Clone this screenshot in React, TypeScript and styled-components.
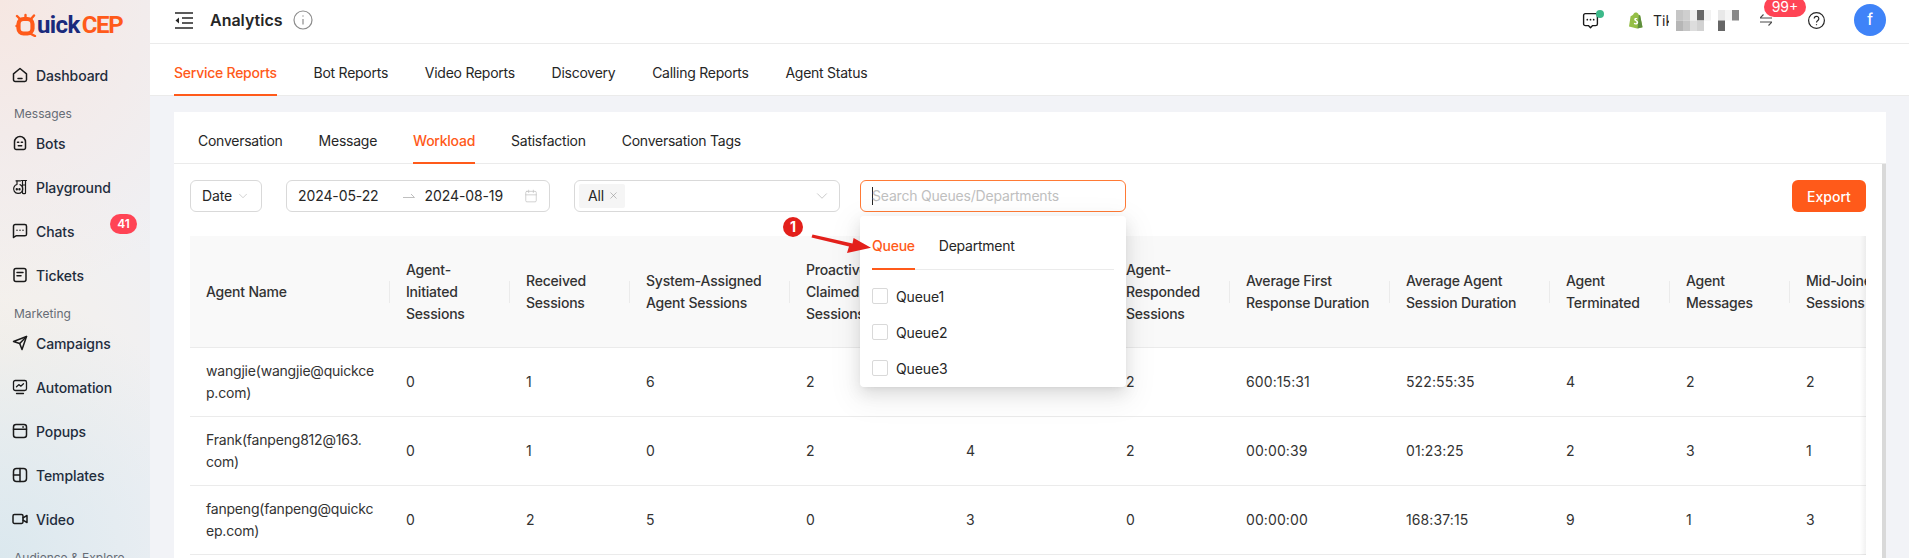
import React from 'react'
import styled, { createGlobalStyle } from 'styled-components'
import { Calendar, ChevronDown, X } from 'lucide-react'

const ORANGE = '#ff5a1a'

const GlobalStyle = createGlobalStyle`
  html, body {
    margin: 0;
    padding: 0;
    background: #fff;
    font-family: Inter, "Liberation Sans", sans-serif;
    font-size: 14px;
    letter-spacing: -0.2px;
    color: #262626;
  }
`

const Page = styled.div`
  display: flex;
  width: 1909px;
  height: 558px;
  overflow: hidden;
`

const Sidebar = styled.aside`
  width: 150px;
  flex: none;
  height: 100%;
  overflow: hidden;
  background:
    radial-gradient(260px 300px at 0% 0%, #f6e7e2 0%, rgba(246, 231, 226, 0) 100%),
    radial-gradient(240px 260px at 0% 100%, #dbe8ee 0%, rgba(219, 232, 238, 0) 100%),
    radial-gradient(200px 200px at 0% 62%, #f5f0ea 0%, rgba(245, 240, 234, 0) 100%),
    #eff0f4;
`

const Logo = styled.div`
  display: flex;
  align-items: center;
  height: 53px;
  padding: 0 0 4px 15px;
  box-sizing: border-box;
  font-family: Roboto, sans-serif;
  font-size: 24px;
  font-weight: 700;
`

const LogoDark = styled.span`
  color: #1a2a7c;
  letter-spacing: -0.6px;
`

const LogoBright = styled.span`
  color: ${ORANGE};
  letter-spacing: -1.3px;
  margin-left: 2px;
`

const NavItem = styled.div`
  position: relative;
  display: flex;
  align-items: center;
  height: 44px;
  padding-left: 12px;
  gap: 8px;
  font-weight: 500;
  letter-spacing: -0.1px;
  color: #1f2d3d;

  svg {
    flex: none;
  }
`

const NavLabel = styled.div`
  height: 24px;
  padding: 9px 0 0 14px;
  box-sizing: border-box;
  font-size: 12px;
  letter-spacing: 0;
  line-height: 16px;
  color: #666c75;
  white-space: nowrap;
`

const CountBadge = styled.span`
  position: absolute;
  left: 110px;
  top: 5px;
  width: 27px;
  height: 20px;
  border-radius: 10px;
  background: #ff4455;
  color: #fff;
  font-size: 12px;
  font-weight: 600;
  line-height: 20px;
  text-align: center;
`

const Main = styled.main`
  flex: 1;
  min-width: 0;
  display: flex;
  flex-direction: column;
  background: #f2f3f7;
`

const TopBar = styled.header`
  display: flex;
  align-items: center;
  flex: none;
  height: 44px;
  box-sizing: border-box;
  padding: 0 23px 3px 25px;
  background: #fff;
  border-bottom: 1px solid #ebebeb;
`

const PageTitle = styled.h1`
  margin: 0 10px 0 17px;
  font-size: 16px;
  font-weight: 600;
  letter-spacing: 0;
  color: #262626;
`

const HeaderSlot = styled.div<{ $ml: number }>`
  position: relative;
  display: flex;
  align-items: center;
  margin-left: ${({ $ml }) => $ml}px;
`

const HeaderSpacer = styled.div`
  flex: 1;
`

const GreenDot = styled.span`
  position: absolute;
  right: -5px;
  top: -2px;
  width: 8px;
  height: 8px;
  border-radius: 50%;
  background: #3cb98a;
`

const ShopName = styled.span`
  width: 16px;
  overflow: hidden;
  margin-left: 10px;
  margin-right: 7px;
  white-space: nowrap;
  letter-spacing: 0;
  color: #262626;
`

const SwapBadge = styled.span`
  position: absolute;
  left: 4px;
  top: -17px;
  width: 42px;
  height: 20px;
  border-radius: 10px;
  background: #ff4455;
  color: #fff;
  font-size: 14px;
  letter-spacing: 0;
  line-height: 20px;
  text-align: center;
`

const Avatar = styled.div`
  width: 32px;
  height: 32px;
  border-radius: 50%;
  background: #3f83f8;
  color: #fff;
  font-size: 15px;
  font-weight: 500;
  line-height: 32px;
  text-align: center;
`

const TabRow = styled.nav<{ $gap: number }>`
  display: flex;
  flex: none;
  gap: ${({ $gap }) => $gap}px;
  height: 52px;
  box-sizing: border-box;
  padding-left: 24px;
  background: #fff;
  border-bottom: 1px solid #ebebeb;
`

const TabItem = styled.div<{ $active?: boolean }>`
  display: flex;
  align-items: center;
  margin-bottom: -1px;
  padding-top: 6px;
  border-bottom: 2.5px solid ${({ $active }) => ($active ? ORANGE : 'transparent')};
  box-sizing: border-box;
  color: ${({ $active }) => ($active ? ORANGE : '#262626')};
  font-weight: ${({ $active }) => ($active ? 500 : 400)};
  letter-spacing: -0.25px;
  white-space: nowrap;
`

const Content = styled.div`
  flex: 1;
  min-height: 0;
  padding: 16px 23px 0 24px;
`

const Card = styled.section`
  display: flex;
  flex-direction: column;
  height: 100%;
  background: #fff;
  border-radius: 6px 6px 0 0;
`

const CardBody = styled.div`
  flex: 1;
  min-height: 0;
  display: flex;
`

const Panel = styled.div`
  flex: 1;
  min-width: 0;
  padding: 16px 16px 0;
`

const ScrollThumb = styled.div`
  width: 4px;
  flex: none;
  background: #d9d9d9;
`

const Filters = styled.div`
  display: flex;
  align-items: center;
  height: 32px;
  margin-bottom: 24px;
`

const Field = styled.div<{ $width: number; $ml?: number; $focus?: boolean }>`
  position: relative;
  display: flex;
  align-items: center;
  flex: none;
  width: ${({ $width }) => $width}px;
  height: 32px;
  margin-left: ${({ $ml }) => $ml ?? 0}px;
  padding: 0 11px 1px;
  box-sizing: border-box;
  border: 1px solid ${({ $focus }) => ($focus ? '#ff7a35' : '#d9d9d9')};
  border-radius: 6px;
  background: #fff;
  color: #262626;
  letter-spacing: -0.1px;
`

const FieldEnd = styled.span`
  display: flex;
  margin-left: auto;
  color: #bfbfbf;
`

const TagChevron = styled(ChevronDown)`
  margin-right: -3px;
`

const RangeArrow = styled.svg`
  margin: 0 10px 0 24px;
`

const Tag = styled.span`
  display: flex;
  align-items: center;
  gap: 4px;
  height: 24px;
  margin-left: -7px;
  padding: 0 6px 0 9px;
  border-radius: 2px;
  background: #f5f5f5;
  color: #262626;
`

const Caret = styled.span`
  width: 1px;
  height: 18px;
  margin-right: -1px;
  background: #262626;
`

const Placeholder = styled.span`
  color: #bfbfbf;
  letter-spacing: -0.2px;
  white-space: nowrap;
`

const ExportButton = styled.button`
  width: 74px;
  height: 32px;
  margin-left: auto;
  padding: 0;
  border: 0;
  border-radius: 6px;
  background: ${ORANGE};
  color: #fff;
  font: 500 14px Inter, sans-serif;
`

const Dropdown = styled.div`
  position: absolute;
  z-index: 5;
  left: -1px;
  top: 35px;
  width: 266px;
  height: 171px;
  padding: 0 12px;
  box-sizing: border-box;
  border-radius: 4px;
  background: #fff;
  box-shadow: 0 6px 16px rgba(0, 0, 0, 0.1), 0 3px 6px -4px rgba(0, 0, 0, 0.12), 0 9px 28px 8px rgba(0, 0, 0, 0.05);
`

const DropdownTabs = styled.div`
  display: flex;
  gap: 24px;
  height: 54px;
  margin-bottom: 8px;
  border-bottom: 1px solid #ebebeb;
  box-sizing: border-box;
`

const DropdownOption = styled.label`
  display: flex;
  align-items: center;
  gap: 8px;
  height: 36px;
  color: #262626;
`

const CheckBox = styled.span`
  width: 16px;
  height: 16px;
  box-sizing: border-box;
  border: 1px solid #d9d9d9;
  border-radius: 2px;
  background: #fff;
`

const StepBadge = styled.span`
  position: absolute;
  z-index: 6;
  left: -78px;
  top: 36px;
  width: 20px;
  height: 20px;
  border-radius: 50%;
  background: #e3201b;
  color: #fff;
  font-size: 14px;
  font-weight: 700;
  line-height: 20px;
  text-align: center;
`

const StepArrow = styled.svg`
  position: absolute;
  z-index: 6;
  left: -53px;
  top: 51px;
`

const TableWrap = styled.div`
  position: relative;
  overflow: hidden;

  &::after {
    content: '';
    position: absolute;
    top: 0;
    right: 0;
    bottom: 0;
    width: 6px;
    background: linear-gradient(to right, rgba(0, 0, 0, 0), rgba(0, 0, 0, 0.05));
  }
`

const Table = styled.table`
  table-layout: fixed;
  width: 1720px;
  border-collapse: separate;
  border-spacing: 0;
`

const HeadCell = styled.th`
  position: relative;
  height: 112px;
  padding: 0 16px;
  box-sizing: border-box;
  background: #f9f9f9;
  border-bottom: 1px solid #ebebeb;
  color: #333;
  font-size: 14px;
  font-weight: 500;
  line-height: 22px;
  text-align: left;
  white-space: pre-line;

  &:not(:last-child)::after {
    content: '';
    position: absolute;
    right: 0;
    top: 45px;
    width: 1px;
    height: 22px;
    background: #ebebeb;
  }
`

const BodyCell = styled.td`
  padding: 12px 16px;
  border-bottom: 1px solid #ebebeb;
  color: #333;
  letter-spacing: 0.1px;
  line-height: 22px;
  white-space: pre;

  &:first-child {
    letter-spacing: -0.2px;
  }
`

const columns: { title: string; width: number }[] = [
  { title: 'Agent Name', width: 200 },
  { title: 'Agent-Initiated Sessions', width: 120 },
  { title: 'Received Sessions', width: 120 },
  { title: 'System-Assigned Agent Sessions', width: 160 },
  { title: 'Proactively\nClaimed\nSessions', width: 160 },
  { title: '', width: 160 },
  { title: 'Agent-Responded Sessions', width: 120 },
  { title: 'Average First Response Duration', width: 160 },
  { title: 'Average Agent Session Duration', width: 160 },
  { title: 'Agent Terminated', width: 120 },
  { title: 'Agent Messages', width: 120 },
  { title: 'Mid-Joined Sessions', width: 120 },
]

// the long agent names wrap inside the address, same place as the product does
const rows: string[][] = [
  ['wangjie(wangjie@quickce\np.com)', '0', '1', '6', '2', '4', '2', '600:15:31', '522:55:35', '4', '2', '2'],
  ['Frank(fanpeng812@163.\ncom)', '0', '1', '0', '2', '4', '2', '00:00:39', '01:23:25', '2', '3', '1'],
  ['fanpeng(fanpeng@quickc\nep.com)', '0', '2', '5', '0', '3', '0', '00:00:00', '168:37:15', '9', '1', '3'],
]

const mosaic: [number, number, string][] = [
  [0, 0, '#c6c6c6'], [1, 0, '#cfcfcf'], [2, 0, '#eeeeee'], [3, 0, '#666666'], [4, 0, '#f2f2f2'],
  [6, 0, '#e8e8e8'], [7, 0, '#f5f5f5'], [8, 0, '#888888'],
  [0, 1, '#b6b6b6'], [1, 1, '#c6c6c6'], [2, 1, '#dddddd'], [3, 1, '#d2d2d2'], [6, 1, '#666666'],
]

const Line = ({ children, size = 16, sw = 1.5 }: { children: React.ReactNode; size?: number; sw?: number }) => (
  <svg
    width={size}
    height={size}
    viewBox="0 0 16 16"
    fill="none"
    stroke="#1a1a1a"
    strokeWidth={sw}
    strokeLinecap="round"
    strokeLinejoin="round"
  >
    {children}
  </svg>
)

const navIcons: Record<string, React.ReactNode> = {
  Dashboard: (
    <Line>
      <path d="M1.5 6.8 8 1.5l6.5 5.3v6a1.7 1.7 0 0 1-1.7 1.7H3.2a1.7 1.7 0 0 1-1.7-1.7z" />
      <path d="M6 11.5h4" />
    </Line>
  ),
  Bots: (
    <Line>
      <path d="M2.5 7a5.5 5.5 0 0 1 11 0v5.7a1.8 1.8 0 0 1-1.8 1.8H4.3a1.8 1.8 0 0 1-1.8-1.8z" />
      <path d="M5.5 7.2h1.2M9.3 7.2h1.2M6.3 10.8h3.4" />
    </Line>
  ),
  Playground: (
    <Line sw={1.2}>
      <path d="M9.5 1.5h5M10.5 1.5v12.2a1 1 0 0 0 1 1h1a1 1 0 0 0 1-1V1.5M10.5 6h3M4 1.8h4.5" />
      <path d="M5 2v3.4a4.6 4.6 0 1 0 3 .2" />
      <circle cx="4.8" cy="10.2" r=".6" />
      <circle cx="7.5" cy="10.2" r=".6" />
    </Line>
  ),
  Chats: (
    <Line>
      <path d="M1.5 3.2c0-.9.7-1.7 1.7-1.7h9.6c1 0 1.7.8 1.7 1.7v8c0 .9-.7 1.6-1.7 1.6H4L1.5 14.5z" />
      <path d="M5 7.2h.01M8 7.2h.01M11 7.2h.01" />
    </Line>
  ),
  Tickets: (
    <Line>
      <rect x="2" y="1.5" width="12" height="13" rx="2" />
      <path d="M5 5.5h6M5 8.8h4" />
    </Line>
  ),
  Campaigns: (
    <Line>
      <path d="M1.5 6.5 14.5 1.5 10 14.5 7.7 8.5z" />
      <path d="M7.7 8.5 14.5 1.5" />
    </Line>
  ),
  Automation: (
    <Line sw={1.3}>
      <rect x="1.5" y="1.5" width="13" height="10" rx="1.8" />
      <path d="M4.5 14.5h7M4.5 7.8 6.8 5.6l2 1.6 2.7-2.4" />
    </Line>
  ),
  Popups: (
    <Line>
      <rect x="1.5" y="1.5" width="13" height="13" rx="2.5" />
      <path d="M1.5 6.2h13M10.8 4h.6" />
    </Line>
  ),
  Templates: (
    <Line>
      <rect x="1.5" y="1.5" width="13" height="13" rx="3" />
      <path d="M8 1.5v13M1.5 8H8" />
    </Line>
  ),
  Video: (
    <Line>
      <rect x="1" y="3.5" width="10" height="9" rx="1.4" />
      <path d="m11 6.8 4-2.3v7l-4-2.3" />
    </Line>
  ),
}

const navGroups: { label?: string; items: string[] }[] = [
  { items: ['Dashboard'] },
  { label: 'Messages', items: ['Bots', 'Playground', 'Chats', 'Tickets'] },
  { label: 'Marketing', items: ['Campaigns', 'Automation', 'Popups', 'Templates', 'Video'] },
  { label: 'Audience & Explore', items: [] },
]

const topTabs = ['Service Reports', 'Bot Reports', 'Video Reports', 'Discovery', 'Calling Reports', 'Agent Status']
const cardTabs = ['Conversation', 'Message', 'Workload', 'Satisfaction', 'Conversation Tags']

const LogoMark = () => (
  <svg width="22" height="24" viewBox="0 0 22 24" fill="none">
    <rect x="3.5" y="6" width="14" height="14.5" rx="5" stroke={ORANGE} strokeWidth="4.2" />
    <path d="M2 3 5 6M19 2.5 16 6M10.5 2v3M14 20l6 3" stroke={ORANGE} strokeWidth="2.4" strokeLinecap="round" />
    <circle cx="1.5" cy="13" r="1.2" fill={ORANGE} />
  </svg>
)

const App = () => {
  return (
    <Page>
      <GlobalStyle />
      <Sidebar>
        <Logo>
          <LogoMark />
          <LogoDark>uick</LogoDark>
          <LogoBright>CEP</LogoBright>
        </Logo>
        {navGroups.map((group, index) => (
          <div key={index}>
            {group.label && <NavLabel>{group.label}</NavLabel>}
            {group.items.map((item) => (
              <NavItem key={item}>
                {navIcons[item]}
                {item}
                {item === 'Chats' && <CountBadge>41</CountBadge>}
              </NavItem>
            ))}
          </div>
        ))}
      </Sidebar>
      <Main>
        <TopBar>
          <svg width="18" height="17" viewBox="0 0 18 17" fill="none" stroke="#262626" strokeWidth="1.6">
            <path d="M0 1h18M0 16h18M7 6h11M7 11h11" />
            <path d="M4 5.5v6L.5 8.5z" fill="#262626" strokeWidth="0" />
          </svg>
          <PageTitle>Analytics</PageTitle>
          <svg width="20" height="20" viewBox="0 0 20 20" fill="none" stroke="#8c8c8c" strokeWidth="1.2">
            <circle cx="10" cy="10" r="9" />
            <path d="M10 9v5.5" />
            <path d="M10 5.4v1" strokeWidth="1.4" />
          </svg>
          <HeaderSpacer />
          <HeaderSlot $ml={0}>
            <Line size={17} sw={1.3}>
              <path d="M1.5 3.2c0-.9.7-1.7 1.7-1.7h9.6c1 0 1.7.8 1.7 1.7v8c0 .9-.7 1.6-1.7 1.6H10L8 14.8l-2-2H3.2c-1 0-1.7-.7-1.7-1.6z" />
              <path d="M5 7.2h.01M8 7.2h.01M11 7.2h.01" strokeWidth="1.6" />
            </Line>
            <GreenDot />
          </HeaderSlot>
          <HeaderSlot $ml={29}>
            <svg width="15" height="17" viewBox="0 0 15 17">
              <path d="M1 14.5 2.6 4.2C4 3.6 5 3 5.5 2 6.5.5 8 .3 9 .8c.8.3 1.4 1 1.7 2l1.3.4L14.5 15.2 9 16.5z" fill="#95bf47" />
              <path d="M9.6 16.4 14.5 15.2 12.2 3.4l-1.4-.2z" fill="#5e8e3e" />
              <path d="M9.2 6.4c-1-.6-3-.4-3 1.2 0 1.6 2.4 1.6 2.4 2.8 0 1-1.4.9-2.4.3l-.4 1.3c1.6.9 4.4.5 4.4-1.6 0-1.9-2.4-2-2.4-2.9 0-.6 1-.6 1.9-.2z" fill="#fff" />
            </svg>
            <ShopName>TikTok</ShopName>
            <svg width="64" height="21" viewBox="0 0 64 21">
              {mosaic.map(([col, row, color], index) => (
                <rect key={index} x={col * 7} y={row * 10.5} width="7" height="10.5" fill={color} />
              ))}
            </svg>
          </HeaderSlot>
          <HeaderSlot $ml={20}>
            <svg width="12" height="12" viewBox="0 0 12 12" fill="none" stroke="#4a4a4a" strokeWidth="1.1">
              <path d="M0 4h12M0 4l3.5-3.5M12 8H0M12 8l-3.5 3.5" />
            </svg>
            <SwapBadge>99+</SwapBadge>
          </HeaderSlot>
          <HeaderSlot $ml={36}>
            <svg width="17" height="17" viewBox="0 0 17 17" fill="none" stroke="#262626" strokeWidth="1.2">
              <circle cx="8.5" cy="8.5" r="7.9" />
              <path d="M6.2 6.6a2.3 2.3 0 1 1 3.6 1.9c-.9.6-1.3 1-1.3 2" />
              <path d="M8.5 12.2v1" />
            </svg>
          </HeaderSlot>
          <HeaderSlot $ml={29}>
            <Avatar>f</Avatar>
          </HeaderSlot>
        </TopBar>
        <TabRow $gap={36.7}>
          {topTabs.map((tab, index) => (
            <TabItem key={tab} $active={index === 0}>
              {tab}
            </TabItem>
          ))}
        </TabRow>
        <Content>
          <Card>
            <TabRow $gap={36}>
              {cardTabs.map((tab) => (
                <TabItem key={tab} $active={tab === 'Workload'}>
                  {tab}
                </TabItem>
              ))}
            </TabRow>
            <CardBody>
              <Panel>
                <Filters>
                  <Field $width={72}>
                    Date
                    <FieldEnd>
                      <ChevronDown size={14} strokeWidth={1.2} />
                    </FieldEnd>
                  </Field>
                  <Field $width={264} $ml={24}>
                    2024-05-22
                    <RangeArrow width="12" height="6" viewBox="0 0 12 6" fill="none" stroke="#bfbfbf" strokeWidth="1">
                      <path d="M0 4.5h11.5L8 1" />
                    </RangeArrow>
                    2024-08-19
                    <FieldEnd>
                      <Calendar size={14} strokeWidth={1.2} />
                    </FieldEnd>
                  </Field>
                  <Field $width={266} $ml={24}>
                    <Tag>
                      All
                      <X size={11} strokeWidth={1.2} color="#8c8c8c" />
                    </Tag>
                    <FieldEnd>
                      <TagChevron size={18} strokeWidth={1.1} />
                    </FieldEnd>
                  </Field>
                  <Field $width={266} $ml={20} $focus>
                    <Caret />
                    <Placeholder>Search Queues/Departments</Placeholder>
                    <StepBadge>1</StepBadge>
                    <StepArrow width="64" height="24" viewBox="0 0 64 24">
                      <path d="M3.5 5.6 4.5 2.6 44.5 11.5 45.6 6 63 15.8 39 21 41 14.6z" fill="#e3201b" />
                    </StepArrow>
                    <Dropdown>
                      <DropdownTabs>
                        <TabItem $active>Queue</TabItem>
                        <TabItem>Department</TabItem>
                      </DropdownTabs>
                      {['Queue1', 'Queue2', 'Queue3'].map((option) => (
                        <DropdownOption key={option}>
                          <CheckBox />
                          {option}
                        </DropdownOption>
                      ))}
                    </Dropdown>
                  </Field>
                  <ExportButton>Export</ExportButton>
                </Filters>
                <TableWrap>
                  <Table>
                    <colgroup>
                      {columns.map((column, index) => (
                        <col key={index} width={column.width} />
                      ))}
                    </colgroup>
                    <thead>
                      <tr>
                        {columns.map((column, index) => (
                          <HeadCell key={index}>{column.title}</HeadCell>
                        ))}
                      </tr>
                    </thead>
                    <tbody>
                      {rows.map((row, rowIndex) => (
                        <tr key={rowIndex}>
                          {row.map((value, index) => (
                            <BodyCell key={index}>{value}</BodyCell>
                          ))}
                        </tr>
                      ))}
                    </tbody>
                  </Table>
                </TableWrap>
              </Panel>
              <ScrollThumb />
            </CardBody>
          </Card>
        </Content>
      </Main>
    </Page>
  )
}

export default App
